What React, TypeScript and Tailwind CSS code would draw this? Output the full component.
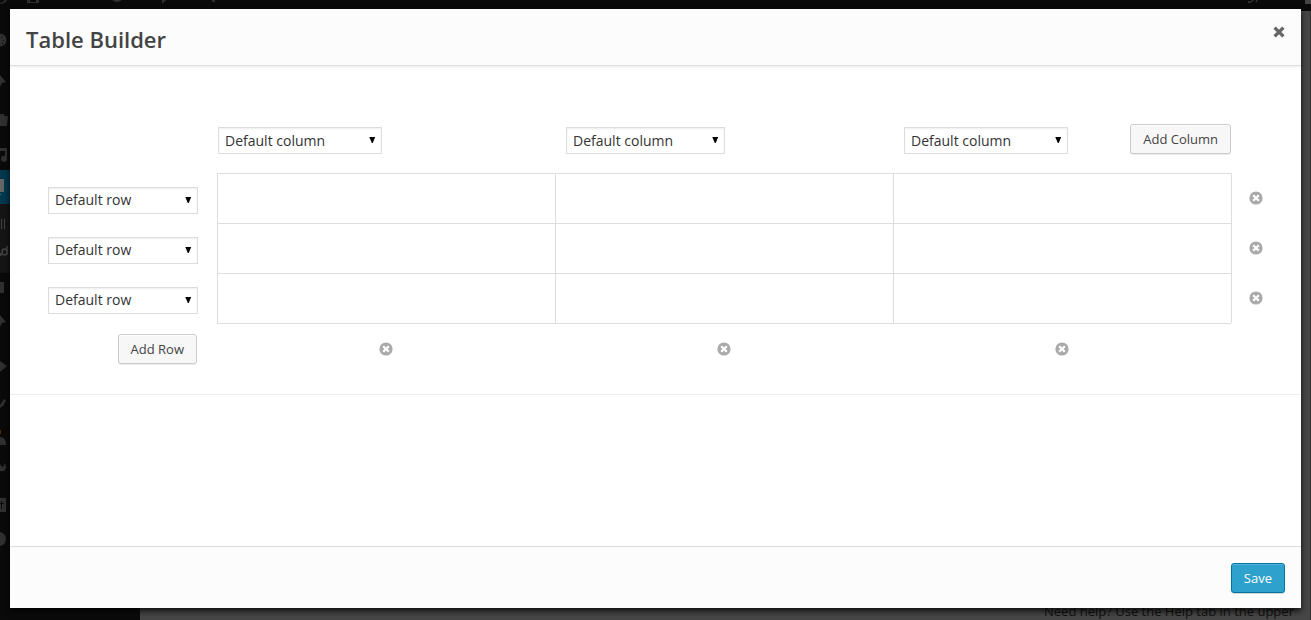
import { useState } from "react";
import type { ReactNode } from "react";

const columnWidths = ["w-[164px]", "w-[159px]", "w-[164px]"];
const rows = ["Row 1", "Row 2", "Row 3"];

function Select({ label, value, className }: { label: string; value: string; className: string }) {
  return (
    <span className={`relative inline-block ${className}`}>
      <select
        aria-label={label}
        className="block h-[27px] w-full appearance-none border border-[#dddddd] bg-white pl-1.5 pr-5 text-sm text-[#333333] shadow-[inset_0_1px_2px_rgba(0,0,0,0.07)]"
      >
        <option>{value}</option>
      </select>
      <svg className="pointer-events-none absolute right-1.5 top-2.5 h-1.5 w-[7px]" viewBox="0 0 7 6" aria-hidden="true">
        <path d="M0.3 0h5.9L3.7 6H2.8z" fill="#000" />
      </svg>
    </span>
  );
}

function Button({ children }: { children: ReactNode }) {
  return (
    <button
      type="button"
      className="h-[30px] rounded-[3px] border border-[#cccccc] bg-[#f7f7f7] px-3 text-[13px] leading-7 whitespace-nowrap text-[#444444] shadow-[inset_0_1px_0_#ffffff,0_1px_0_rgba(0,0,0,0.08)]"
    >
      {children}
    </button>
  );
}

function RemoveButton({ label }: { label: string }) {
  return (
    <button type="button" aria-label={label} className="block">
      <svg className="h-3.5 w-3.5" viewBox="0 0 14 14" aria-hidden="true">
        <circle cx="7" cy="7" r="6.6" fill="#aaaaaa" />
        <path d="M4.2 4.2l5.6 5.6M9.8 4.2l-5.6 5.6" stroke="#fff" strokeWidth="2.3" />
      </svg>
    </button>
  );
}

function AdminPage() {
  return (
    <div className="absolute inset-0 flex flex-col overflow-hidden bg-[#464646]" aria-hidden="true">
      <div className="flex h-[11px] shrink-0 justify-between bg-[#0a0a0a]">
        <svg className="h-[11px] w-[300px]" viewBox="0 0 300 11" fill="#303030">
          <path d="M0 4l4-1 3-3H5L3 2 0 3zM27 0h3v2h6V0h3v3H27zM112 0h10q-5 4-10 0zM162 0h4l-4 4zM212 0h3v2h-3z" />
        </svg>
        <svg className="h-[11px] w-[91px]" viewBox="0 0 91 11" fill="none">
          <path d="M33 0q-1 3-5 2M37 0l-1 2" stroke="#3a3a3a" strokeWidth="1.3" />
          <path d="M85 0h6v4h-6z" fill="#444" />
        </svg>
      </div>
      <div className="flex flex-1">
        <div className="w-[140px] bg-[#0a0a0a]">
          <svg className="h-[609px] w-2.5" viewBox="0 11 10 609" fill="#303030">
            <circle cx="0" cy="40" r="6.5" />
            <path d="M1 37h1v1H1zM3 40h1v1H3zM2 43h1v1H2z" fill="#0a0a0a" />
            <path d="M0 75l6 7-4 1-2 4z" />
            <path d="M0 114h4v2h4l-1 10H0zM0 148h7v11a3 3 0 1 1-2-3v-5H0z" />
            <path d="M0 170h10v34H0z" fill="#00384e" />
            <path d="M0 204h10v69H0z" fill="#151515" />
            <path d="M0 179h4v13H0zM0 194h1v1H0z" fill="#666" />
            <path d="M1 219h1v10H1zM4 219h1v10H4z" fill="#444" />
            <path d="M0 254h1v1H0zM7 246v9M7 252a2.5 3 0 1 0-5 0 2.5 3 0 1 0 5 0z" fill="none" stroke="#444" strokeWidth="1.5" />
            <path d="M0 282h3q1 0 1 1v9q0 1-1 1H0zM0 315l6 7-4 1-2 4zM0 361l7 5-7 6zM0 405l4-6 2 1-3 6-3 2zM0 437q6 0 6 8H0zM0 464l2 3 2-1v-3q4 4 0 8H0zM0 498h6v14H0z" />
            <path d="M1 501h1v8H1zM0 503h4v1H0z" fill="#0a0a0a" />
            <path d="M0 430h1v4H0z" fill="#4a2c0c" />
            <circle cx="-1" cy="539" r="7" />
          </svg>
        </div>
        <div className="flex flex-1 items-end justify-end border-r border-[#333333] pr-5">
          <p className="w-[246px] text-[13px] leading-[18px] whitespace-nowrap text-[#101010]">
            Need help? Use the Help tab in the upper
          </p>
        </div>
      </div>
    </div>
  );
}

export default function App() {
  const [open, setOpen] = useState(true);
  return (
    <div className="relative flex min-h-screen font-['Open_Sans','Noto_Sans',sans-serif] text-[#444444]">
      <AdminPage />
      {open && (
        <div className="relative flex flex-1 px-2.5 pt-[9px] pb-3">
          <section role="dialog" aria-labelledby="dialog-title" className="flex flex-1 flex-col bg-white shadow-[0_3px_6px_rgba(0,0,0,0.8)]">
            <header className="flex h-[57px] items-start justify-between border-b border-[#dddddd] bg-[#fcfcfc] px-4 shadow-[0_1px_3px_rgba(0,0,0,0.08)]">
              <h1 id="dialog-title" className="pt-4 text-[22px] leading-7 font-semibold">Table Builder</h1>
              <button type="button" aria-label="Close" onClick={() => setOpen(false)} className="pt-4">
                <svg className="h-3.5 w-3" viewBox="0 0 12 14" aria-hidden="true">
                  <path d="M1.6 2.6l8.8 8.8M10.4 2.6l-8.8 8.8" stroke="#666" strokeWidth="3.4" />
                </svg>
              </button>
            </header>
            <main className="flex-1">
              <div className="border-b border-[#eeeeee] pt-[58px] pb-[30px]">
                <table className="w-full table-fixed border-separate border-spacing-0">
                  <colgroup>
                    <col className="w-[207px]" />
                    <col />
                    <col />
                    <col />
                    <col className="w-[70px]" />
                  </colgroup>
                  <thead>
                    <tr className="h-[49px] align-top">
                      <td />
                      {columnWidths.map((width, i) => (
                        <th key={i} scope="col" className={`p-0 font-normal ${i === 0 ? "pl-px" : "pl-[11px]"}`}>
                          <div className="flex items-start justify-between">
                            <span className="flex pt-[3px]">
                              <Select label={`Column ${i + 1}`} value="Default column" className={width} />
                            </span>
                            {i === 2 && <Button>Add Column</Button>}
                          </div>
                        </th>
                      ))}
                      <td />
                    </tr>
                  </thead>
                  <tbody>
                    {rows.map((row) => (
                      <tr key={row} className="h-[50px]">
                        <th scope="row" className="p-0 pr-[19px] pt-1 font-normal">
                          <span className="flex justify-end">
                            <Select label={row} value="Default row" className="w-[150px]" />
                          </span>
                        </th>
                        <td className="border-t border-l border-[#dddddd]" />
                        <td className="border-t border-l border-[#dddddd]" />
                        <td className="border-t border-l border-[#dddddd]" />
                        <td className="border-l border-[#dddddd] p-0 pl-[17px]">
                          <RemoveButton label={`Remove ${row}`} />
                        </td>
                      </tr>
                    ))}
                  </tbody>
                  <tfoot>
                    <tr className="align-top">
                      <td className="p-0 pr-5 pt-[11px]">
                        <div className="flex justify-end">
                          <Button>Add Row</Button>
                        </div>
                      </td>
                      {columnWidths.map((_, i) => (
                        <td key={i} className="border-t border-[#dddddd] p-0 pt-[18px]">
                          <div className="flex justify-center">
                            <RemoveButton label={`Remove column ${i + 1}`} />
                          </div>
                        </td>
                      ))}
                      <td />
                    </tr>
                  </tfoot>
                </table>
              </div>
            </main>
            <footer className="flex h-[62px] items-start justify-end border-t border-[#dddddd] bg-[#fcfcfc] px-4 pt-4">
              <button
                type="button"
                className="h-[30px] rounded-[3px] border border-[#0074a2] bg-[#2ea2cc] px-3 text-[13px] leading-7 text-white shadow-[inset_0_1px_0_rgba(120,200,230,0.5),0_1px_0_rgba(0,0,0,0.15)]"
              >
                Save
              </button>
            </footer>
          </section>
        </div>
      )}
    </div>
  );
}
